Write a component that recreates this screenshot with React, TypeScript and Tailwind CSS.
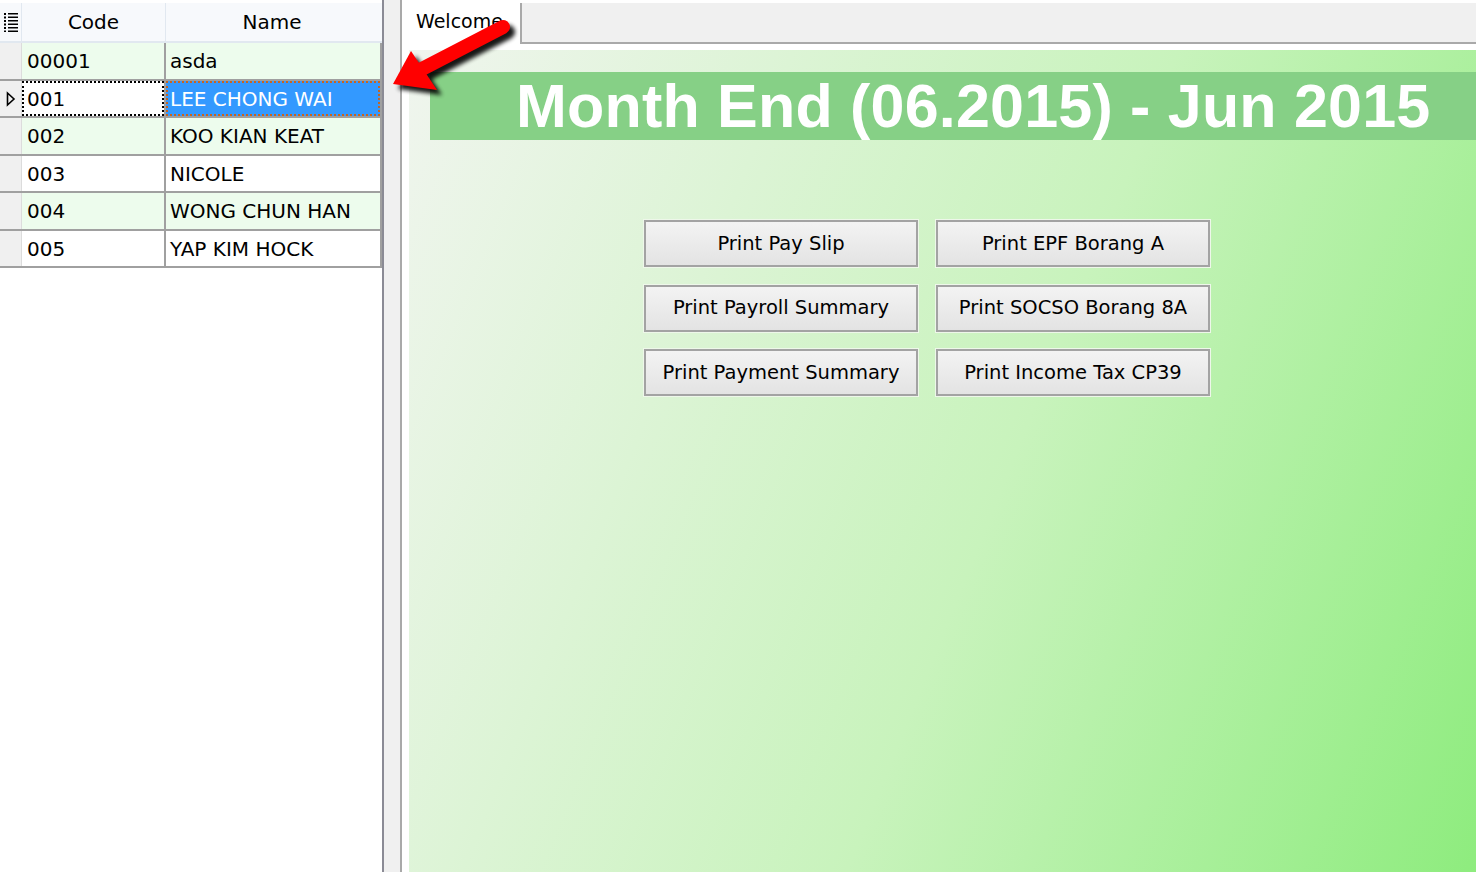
import React from 'react';

const employees = [
  { code: '00001', name: 'asda' },
  { code: '001', name: 'LEE CHONG WAI', selected: true },
  { code: '002', name: 'KOO KIAN KEAT' },
  { code: '003', name: 'NICOLE' },
  { code: '004', name: 'WONG CHUN HAN' },
  { code: '005', name: 'YAP KIM HOCK' },
];

const reports = [
  'Print Pay Slip',
  'Print EPF Borang A',
  'Print Payroll Summary',
  'Print SOCSO Borang 8A',
  'Print Payment Summary',
  'Print Income Tax CP39',
];

function ListIcon() {
  return (
    <svg width="14" height="20" viewBox="0 0 14 20" className="block">
      {[0, 1, 2, 3, 4, 5].map((i) => (
        <g key={i}>
          <rect x="0" y={i * 3.5 + 1} width="2" height="2" fill="#000" />
          <rect x="4" y={i * 3.5 + 1} width="10" height="1.5" fill="#000" />
        </g>
      ))}
    </svg>
  );
}

function RowPointer() {
  return (
    <svg width="10" height="16" viewBox="0 0 10 16" className="block">
      <path d="M1.5 2 L8 8 L1.5 14 Z" fill="none" stroke="#000" strokeWidth="1.6" />
    </svg>
  );
}

function RedArrow() {
  // drawn in page coordinates through the viewBox
  return (
    <svg
      className="absolute left-[380px] top-[10px] pointer-events-none"
      width="140"
      height="95"
      viewBox="380 10 140 95"
    >
      <defs>
        <filter id="arrowShadow" x="-20%" y="-20%" width="140%" height="140%">
          <feGaussianBlur stdDeviation="2" />
        </filter>
      </defs>
      <g transform="translate(5 5)" filter="url(#arrowShadow)" opacity="0.9">
        <line x1="420" y1="70" x2="503" y2="27" stroke="#000" strokeWidth="14" strokeLinecap="round" />
        <polygon points="393,84 411,51 437,90" fill="#000" />
      </g>
      <line x1="420" y1="70" x2="503" y2="27" stroke="#ff0000" strokeWidth="14" strokeLinecap="round" />
      <polygon points="393,84 411,51 437,90" fill="#ff0000" />
    </svg>
  );
}

export default function App() {
  return (
    <div className="relative w-[1478px] h-[872px] flex bg-white overflow-hidden font-['DejaVu_Sans',sans-serif] text-black">
      {/* Employee grid */}
      <div className="w-[382px] flex flex-col pt-[3px] bg-white">
        <div className="h-[40px] flex bg-[#f7f9fc] border-b-2 border-[#e1e8f0]">
          <div className="w-[22px] flex items-center justify-center border-r border-[#e1e8f0] pl-[1px]">
            <ListIcon />
          </div>
          <div className="w-[144px] flex items-center justify-center border-r border-[#e1e8f0] text-[20px]">
            Code
          </div>
          <div className="flex-1 flex items-center justify-center text-[20px] pr-[4px]">Name</div>
        </div>
        {employees.map((emp, i) => (
          <div
            key={emp.code}
            className={`${i % 2 === 0 ? 'h-[38px] bg-[#edfced]' : 'h-[37px] bg-white'} flex border-b-2 border-[#a0a0a0]`}
          >
            <div className="w-[22px] flex items-center justify-center bg-[#f0f0f0] border-r border-[#dcdcdc]">
              {emp.selected && <RowPointer />}
            </div>
            {emp.selected ? (
              <>
                <div className="w-[142px] flex items-center pl-[3px] bg-white border-2 border-dotted border-black text-[20px]">
                  {emp.code}
                </div>
                <div className="w-[2px] bg-[#a0a0a0]" />
                <div className="flex-1 flex items-center pl-[2px] bg-[#3399ff] border-2 border-dotted border-[#c8641e] text-[20px] text-white">
                  {emp.name}
                </div>
              </>
            ) : (
              <>
                <div className="w-[144px] flex items-center pl-[5px] border-r-2 border-[#a0a0a0] text-[20px]">
                  {emp.code}
                </div>
                <div className="flex-1 flex items-center pl-[4px] text-[20px]">{emp.name}</div>
              </>
            )}
            <div className="w-[2px] bg-[#a0a0a0]" />
          </div>
        ))}
      </div>

      {/* Splitter */}
      <div className="w-[2px] bg-[#8b8b95]" />
      <div className="w-[16px] bg-[#f0f0f0]" />
      <div className="w-[2px] bg-[#a9a9a9]" />

      {/* Welcome tab */}
      <div className="flex-1 flex flex-col bg-white pr-[2px]">
        <div className="h-[44px] flex pt-[3px]">
          <div className="w-[118px] pl-[14px] pt-[4px] text-[19px]">Welcome</div>
          <div className="flex-1 bg-[#f0f0f0] border-l-2 border-b-2 border-[#a9a9a9]" />
        </div>
        <div className="flex-1 mt-[6px] ml-[7px] flex flex-col bg-[linear-gradient(112deg,#f0f5ee_0%,#c8f3bc_55%,#8eec7e_100%)]">
          <div className="mt-[22px] ml-[21px] h-[68px] bg-[#86d086] flex items-center pl-[86px]">
            <span className="font-['Liberation_Sans',sans-serif] font-bold text-[61px] leading-none text-white tracking-[0.2px]">
              Month End (06.2015) - Jun 2015
            </span>
          </div>
          <div className="ml-[235px] mt-[80px] grid grid-cols-[274px_274px] gap-x-[18px] gap-y-[17.5px]">
            {reports.map((label) => (
              <button
                key={label}
                className="h-[47px] border-2 border-[#a3a3a3] shadow-[0_0_0_1px_#eef7ea] bg-[linear-gradient(#f3f3f3,#e3e3e3)] text-[19.5px] text-black flex items-center justify-center"
              >
                {label}
              </button>
            ))}
          </div>
        </div>
      </div>

      <RedArrow />
    </div>
  );
}
